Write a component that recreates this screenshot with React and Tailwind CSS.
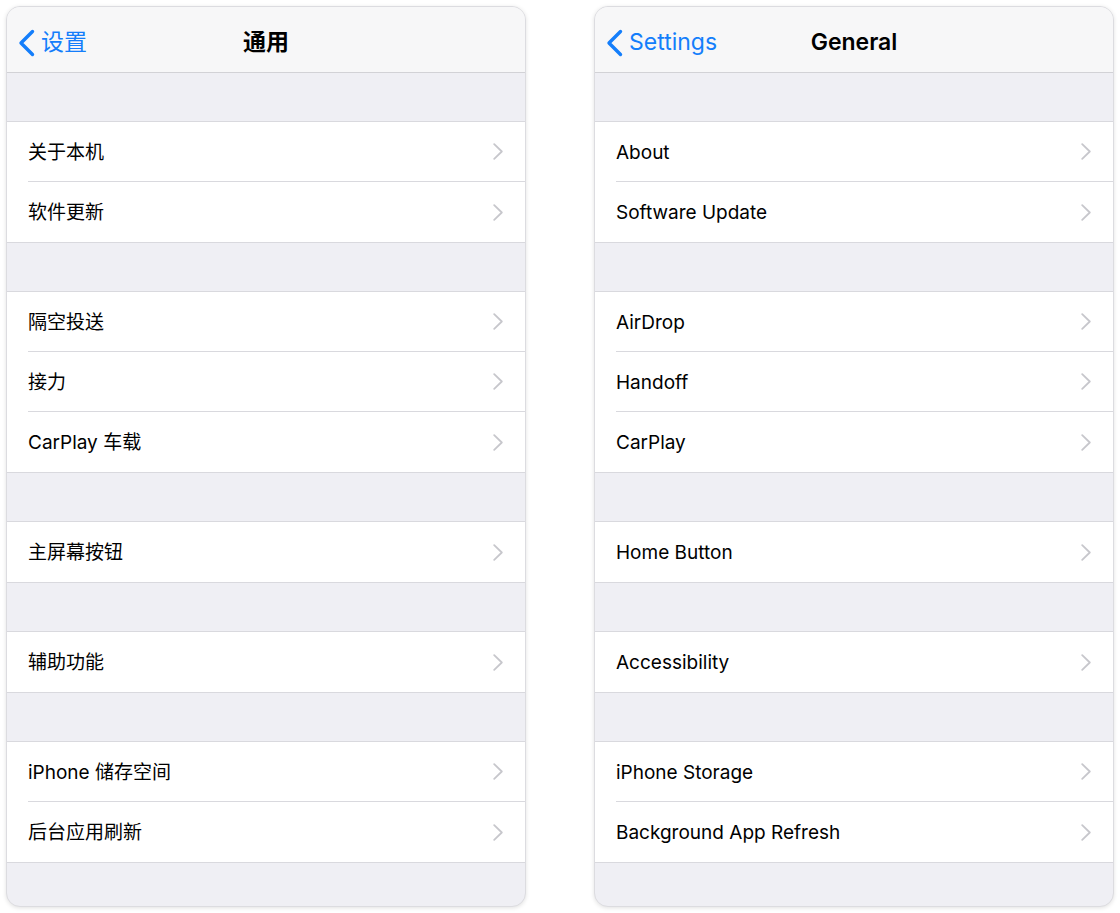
const FONT = { fontFamily: 'Inter, "Noto Sans CJK SC", "Noto Sans", sans-serif' }

const zh = {
  back: '设置',
  title: '通用',
  groups: [
    ['关于本机', '软件更新'],
    ['隔空投送', '接力', 'CarPlay 车载'],
    ['主屏幕按钮'],
    ['辅助功能'],
    ['iPhone 储存空间', '后台应用刷新'],
  ],
}

const en = {
  back: 'Settings',
  title: 'General',
  groups: [
    ['About', 'Software Update'],
    ['AirDrop', 'Handoff', 'CarPlay'],
    ['Home Button'],
    ['Accessibility'],
    ['iPhone Storage', 'Background App Refresh'],
  ],
}

function BackChevron() {
  return (
    <svg width="17" height="28" viewBox="0 0 17 28" fill="none">
      <path d="M14.5 2.5 L3 14 L14.5 25.5" stroke="#147efb" strokeWidth="3.4" strokeLinecap="round" strokeLinejoin="round" />
    </svg>
  )
}

function RowChevron() {
  return (
    <svg width="10" height="17" viewBox="0 0 10 17" fill="none">
      <path d="M1.2 1.2 L8.8 8.5 L1.2 15.8" stroke="#c7c7cc" strokeWidth="1.8" strokeLinecap="round" strokeLinejoin="round" />
    </svg>
  )
}

function Row({ label, last }) {
  return (
    <div className="flex h-[60px] items-center bg-white pl-[21px]">
      <div className={`flex h-full flex-1 items-center pr-[22px] ${last ? '' : 'border-b border-[#d9d9de]'}`}>
        <span className="flex-1 pt-[3px] text-[19px] text-black">{label}</span>
        <RowChevron />
      </div>
    </div>
  )
}

function Panel({ data }) {
  return (
    <div className="flex h-[901px] w-[520px] flex-col overflow-hidden rounded-[14px] border border-[#dcdce0] bg-[#efeff4] shadow-[0_1px_4px_rgba(0,0,0,0.12)]">
      {/* Nav bar */}
      <div className="relative flex h-[66px] shrink-0 items-center border-b border-[#d2d2d6] bg-[#f7f7f8] pt-[6px]">
        <div className="flex items-center gap-[6px] pl-[11px]">
          <BackChevron />
          <span className="text-[23px] text-[#147efb]">{data.back}</span>
        </div>
        <div className="absolute inset-x-0 top-[6px] bottom-0 flex items-center justify-center">
          <span className="text-[23px] font-semibold text-black">{data.title}</span>
        </div>
      </div>

      {data.groups.map((g, i) => (
        <div key={i} className="mt-[48px] border-y border-[#d9d9de]">
          {g.map((label, j) => (
            <Row key={label} label={label} last={j === g.length - 1} />
          ))}
        </div>
      ))}
    </div>
  )
}

export default function App() {
  return (
    <div className="flex h-[913px] w-[1120px] justify-between bg-white px-[6px] pt-[6px]" style={FONT}>
      <Panel data={zh} />
      <Panel data={en} />
    </div>
  )
}
